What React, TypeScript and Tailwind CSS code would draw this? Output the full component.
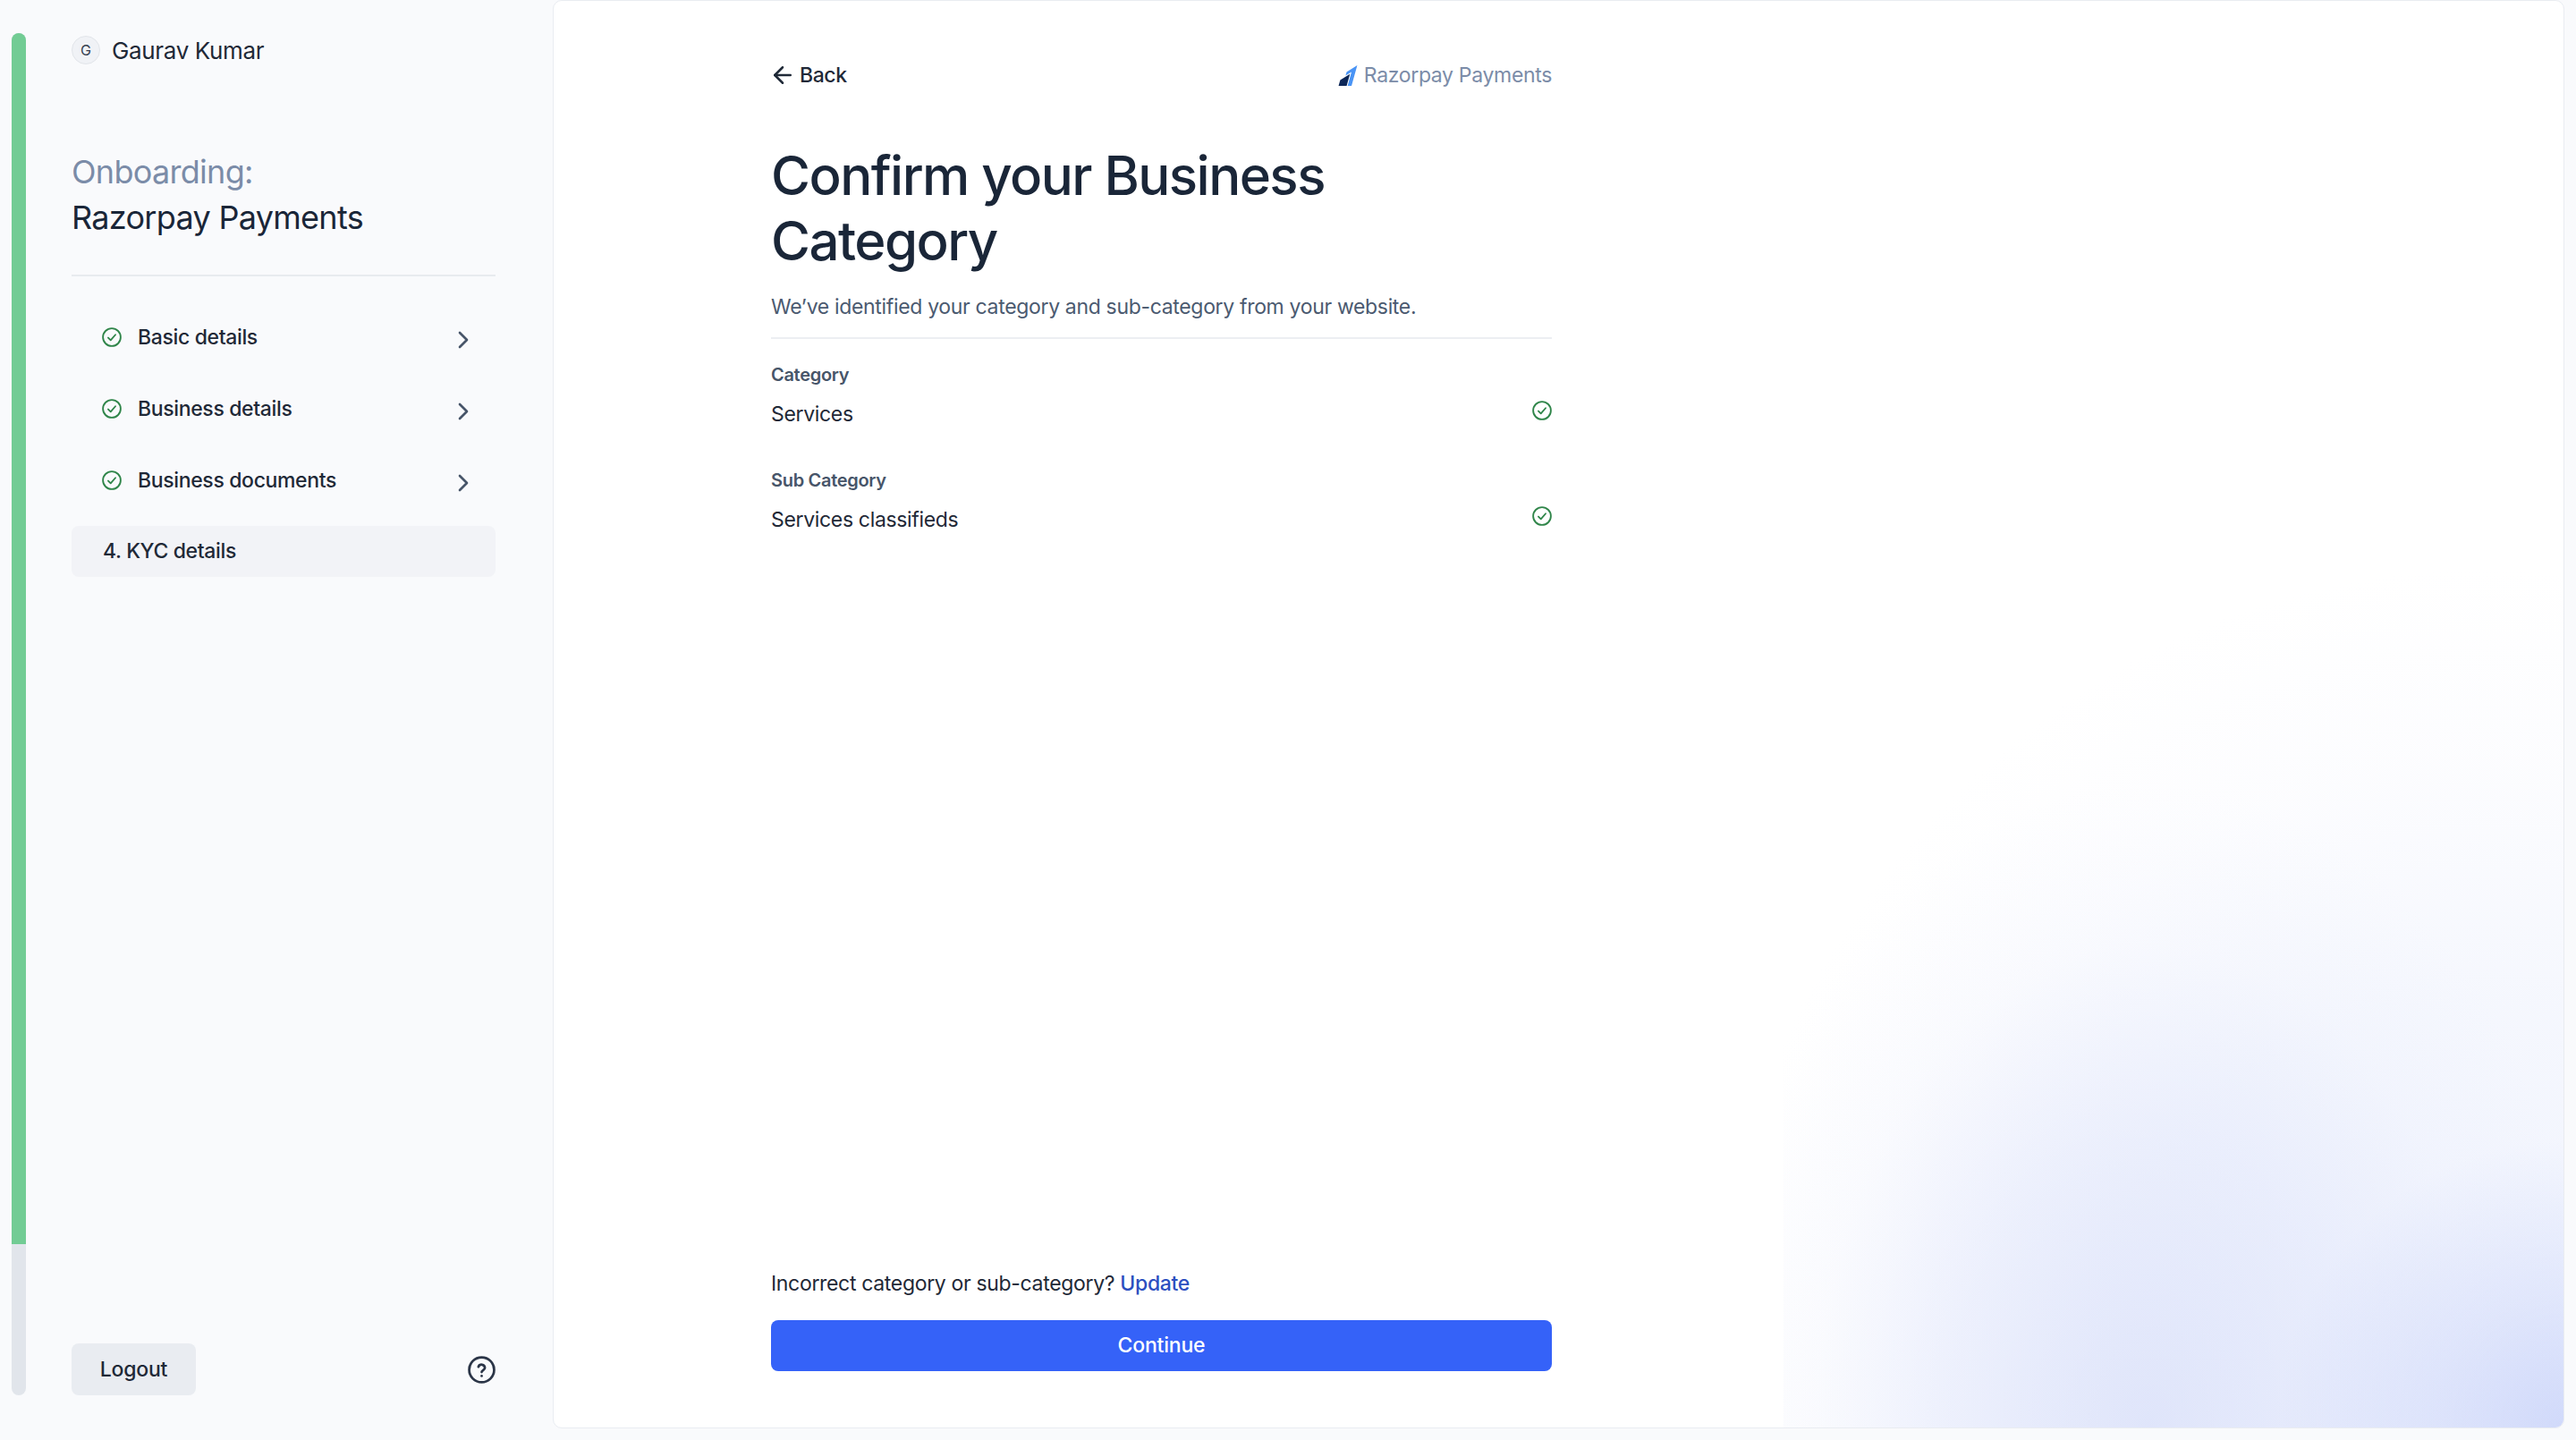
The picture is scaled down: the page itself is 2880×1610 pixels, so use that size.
import React from "react";
import { ArrowLeft, ChevronRight } from "lucide-react";

function Check() {
  return (
    <svg viewBox="0 0 24 24" fill="none" stroke="#2f8549" strokeWidth="2" strokeLinecap="round" strokeLinejoin="round" className="h-[22px] w-[22px] shrink-0">
      <circle cx="12" cy="12" r="10.8" />
      <path d="M7.6 12.6l3 3L16.4 9" />
    </svg>
  );
}

function Help() {
  return (
    <svg viewBox="0 0 24 24" fill="none" stroke="#2b3547" strokeWidth="2.1" strokeLinecap="round" strokeLinejoin="round" className="h-[31px] w-[31px]">
      <circle cx="12" cy="12" r="10.8" />
      <path d="M9.2 9.4a2.9 2.9 0 0 1 5.6.9c0 1.9-2.8 2.4-2.8 3.7" />
      <path d="M12 17.4h.01" />
    </svg>
  );
}

function RazorpayLogo() {
  return (
    <svg viewBox="0 0 24 24" className="h-[23px] w-[24px]" preserveAspectRatio="none">
      <path fill="#4a94f5" d="M22.436 0l-11.91 7.773-1.174 4.276 6.625-4.297L11.65 24h4.391l6.395-24z" />
      <path fill="#0c2657" d="M14.26 10.098L3.389 17.166 1.564 24h9.008l3.688-13.902z" />
    </svg>
  );
}

function Step({ label }: { label: string }) {
  return (
    <div className="flex h-[80px] items-center pl-[34px] pr-[20px]">
      <Check />
      <span className="ml-[18px] flex-1 text-[23px] font-medium tracking-[-0.35px] text-[#1f2937]">{label}</span>
      <ChevronRight size={32} strokeWidth={2} className="relative top-[3px] text-[#475569]" />
    </div>
  );
}

function Field({ label, value }: { label: string; value: string }) {
  return (
    <div className="flex h-[118px] flex-col">
      <div className="h-[32px] text-[20px] font-semibold leading-[32px] tracking-[-0.3px] text-[#475569]">{label}</div>
      <div className="mt-[10px] flex h-[32px] items-center justify-between text-[23px] tracking-[-0.33px] text-[#1f2937]">
        <span className="relative top-[2px]">{value}</span>
        <span className="relative top-[-2px]"><Check /></span>
      </div>
    </div>
  );
}

export default function App() {
  return (
    <div className="flex h-screen w-full bg-[#f9fafc] font-['Inter','Liberation_Sans',sans-serif]">
      <div className="relative flex w-[618px] shrink-0 pb-[50px] pl-[13px] pt-[37px]">
        <div className="flex h-full w-[16px] shrink-0 flex-col overflow-hidden rounded-full bg-[#e1e5eb]">
          <div className="h-[1354px] bg-[#72cc94]" />
        </div>
        <div className="ml-[51px] flex w-[474px] flex-col">
          <div className="flex h-[38px] items-center gap-[13px]">
            <div className="flex h-[32px] w-[32px] items-center justify-center rounded-full border border-[#e2e5ea] bg-[#f0f2f6] text-[16px] text-[#374151]">G</div>
            <span className="text-[26px] tracking-[-0.35px] text-[#1f2937]">Gaurav Kumar</span>
          </div>
          <div className="mt-[92px] text-[36px] leading-[51px] tracking-[-0.7px]">
            <div className="text-[#7b8ca8]">Onboarding:</div>
            <div className="text-[#1a2638]">Razorpay Payments</div>
          </div>
          <div className="mt-[38px] h-[2px] bg-[#e8ebef]" />
          <div className="mt-[28px]">
            <Step label="Basic details" />
            <Step label="Business details" />
            <Step label="Business documents" />
          </div>
          <div className="mt-[11px] flex h-[57px] items-center rounded-[8px] bg-[#f2f3f7] pl-[35px] text-[23px] font-medium tracking-[-0.35px] text-[#1f2937]">4. KYC details</div>
          <div className="mt-auto flex items-center justify-between">
            <div className="flex h-[58px] w-[139px] items-center justify-center rounded-[8px] bg-[#e9ecf1] text-[23px] font-medium tracking-[-0.2px] text-[#1f2937]">Logout</div>
            <Help />
          </div>
        </div>
      </div>
      <div className="relative mb-[13px] mr-[13px] flex flex-1 overflow-hidden rounded-[10px] border border-[#e9ecf1] bg-white">
        <div className="absolute bottom-0 right-0 h-[976px] w-[872px] bg-[radial-gradient(circle_at_100%_100%,rgba(190,202,248,0.62)_0,rgba(190,202,248,0.3)_150px,rgba(190,202,248,0)_320px),radial-gradient(ellipse_500px_720px_at_47%_100%,rgba(208,216,248,0.58)_0,rgba(216,223,250,0.38)_45%,rgba(228,233,251,0.14)_75%,rgba(255,255,255,0)_100%),radial-gradient(ellipse_880px_960px_at_90%_100%,rgba(236,240,253,0.85)_0,rgba(241,244,253,0.7)_50%,rgba(248,249,254,0.4)_78%,rgba(255,255,255,0)_100%)]" />
        <div className="relative ml-[243px] flex w-[873px] flex-col pb-[63px] pt-[64px]">
          <div className="flex h-[38px] items-center justify-between">
            <div className="flex items-center gap-[4px] text-[23px] font-medium tracking-[-0.4px] text-[#1f2937]">
              <ArrowLeft size={30} strokeWidth={2} className="-ml-[2px]" />
              <span>Back</span>
            </div>
            <div className="flex items-center gap-[6px] text-[23px] tracking-[-0.33px] text-[#7b8ca8]">
              <RazorpayLogo />
              <span>Razorpay Payments</span>
            </div>
          </div>
          <h1 className="mt-[57px] w-[720px] text-[60px] font-medium leading-[73px] tracking-[-1.55px] text-[#1a2638]">Confirm your Business Category</h1>
          <p className="mt-[20px] text-[23px] leading-[34px] tracking-[-0.33px] text-[#4b5a70]">We&rsquo;ve identified your category and sub-category from your website.</p>
          <div className="mt-[17px] h-[2px] bg-[#eceef2]" />
          <div className="mt-[24px]">
            <Field label="Category" value="Services" />
            <Field label="Sub Category" value="Services classifieds" />
          </div>
          <div className="mt-auto text-[23px] leading-[34px] tracking-[-0.33px] text-[#1f2937]">
            Incorrect category or sub-category? <span className="font-medium text-[#2c4fc0]">Update</span>
          </div>
          <div className="mt-[24px] flex h-[57px] items-center justify-center rounded-[8px] bg-[#3562f8] text-[23px] font-medium tracking-[-0.2px] text-white">Continue</div>
        </div>
      </div>
    </div>
  );
}
